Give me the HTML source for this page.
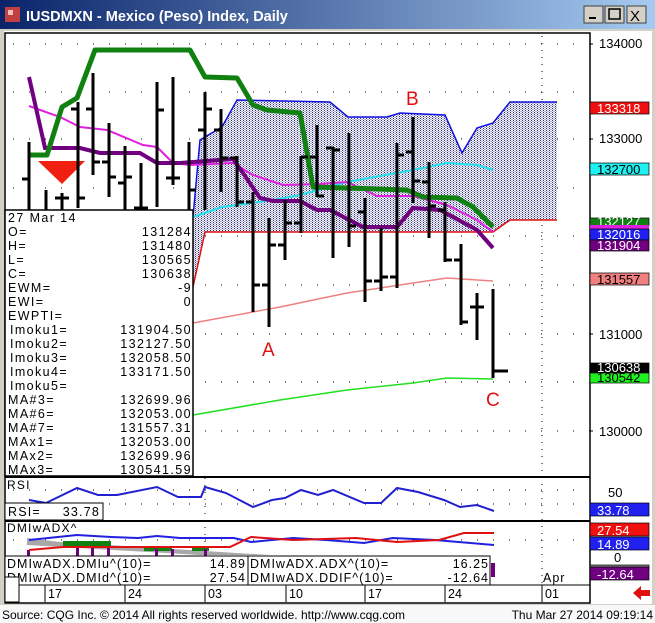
<!DOCTYPE html>
<html><head><meta charset="utf-8"><style>
body{margin:0;width:655px;height:623px;overflow:hidden;background:#D4D0C8}
svg{display:block}
text{font-family:"Liberation Sans",sans-serif}
</style></head><body>
<svg width="655" height="623" viewBox="0 0 655 623" xmlns="http://www.w3.org/2000/svg">
<defs>
<linearGradient id="tb" x1="0" x2="1"><stop offset="0" stop-color="#0A246A"/><stop offset="1" stop-color="#A6CAF0"/></linearGradient>
<pattern id="dots" width="3" height="2" patternUnits="userSpaceOnUse"><rect width="3" height="2" fill="#F4F4FA"/><rect width="1" height="1" fill="#303078"/><rect x="1.5" y="1" width="1" height="1" fill="#7070A8"/></pattern>
</defs>
<rect width="655" height="623" fill="#D4D0C8"/>
<rect x="0" y="605" width="655" height="18" fill="#F8F8F8"/>
<rect x="0" y="0" width="655" height="29" fill="url(#tb)"/>
<rect x="5" y="7" width="15" height="15" fill="#c04040"/><rect x="8" y="10" width="5" height="5" fill="#f0c0c0"/>
<text x="26" y="21" font-size="14.5" font-weight="bold" fill="#fff">IUSDMXN - Mexico (Peso) Index, Daily</text>
<g fill="#D4D0C8" stroke="#404040"><rect x="584" y="6" width="19" height="17"/><rect x="605" y="6" width="19" height="17"/><rect x="627" y="6" width="19" height="17"/></g>
<rect x="589" y="17" width="7" height="2" fill="#000"/>
<rect x="609" y="9" width="11" height="10" fill="none" stroke="#000" stroke-width="1.5"/>
<text x="630" y="21" font-size="15" fill="#000">X</text>
<rect x="4" y="31" width="648" height="573" fill="#fff"/>
<rect x="5" y="33" width="585" height="570" fill="#fff" stroke="#000" stroke-width="1.5"/>
<g stroke="#000" stroke-width="1" stroke-dasharray="1 15">
<line x1="13" y1="44" x2="585" y2="44"/><line x1="13" y1="92" x2="585" y2="92"/><line x1="13" y1="139" x2="585" y2="139"/><line x1="13" y1="188" x2="585" y2="188"/><line x1="13" y1="236" x2="585" y2="236"/><line x1="13" y1="285" x2="585" y2="285"/><line x1="13" y1="334" x2="585" y2="334"/><line x1="13" y1="382" x2="585" y2="382"/><line x1="13" y1="431" x2="585" y2="431"/>
</g>
<g stroke="#000" stroke-dasharray="1 6"><line x1="542" y1="36" x2="542" y2="600"/><line x1="205" y1="478" x2="205" y2="555"/></g>
<polygon fill="url(#dots)" points="193,217 200,140 222,127 237,100 330,102 348,117 387,117 400,113 445,115 462,153 477,128 493,123 510,102 557,102 557,220 510,220 493,232 205,232 193,287"/>
<polyline fill="none" stroke="#1010E0" stroke-width="1.5" points="193,217 200,140 222,127 237,100 330,102 348,117 387,117 400,113 445,115 462,153 477,128 493,123 510,102 557,102"/>
<polyline fill="none" stroke="#E01010" stroke-width="1.5" points="193,287 205,232 493,232 510,220 557,220"/>
<polyline fill="none" stroke="#F08080" stroke-width="1.5" points="193,323 280,307 347,293 413,283 447,278 493,281"/>
<polyline fill="none" stroke="#20E020" stroke-width="1.5" points="193,415 280,400 347,390 413,383 447,378 493,379"/>
<polyline fill="none" stroke="#20E0F0" stroke-width="2" points="193,217 222,207 273,200 300,195 347,182 413,170 447,163 477,165 493,170"/>
<polyline fill="none" stroke="#E020E0" stroke-width="2" points="29,106 60,117 80,127 107,130 143,145 157,147 173,163 190,165 233,163 253,175 283,185 320,184 347,182 377,196 413,196 447,205 477,220 493,232"/>
<polyline fill="none" stroke="#700080" stroke-width="4" points="29,77 45,148 80,148 100,153 140,153 157,163 180,163 233,159 243,173 260,198 273,201 300,201 317,210 330,210 363,227 397,227 413,208 440,210 477,230 493,248"/>
<polyline fill="none" stroke="#108010" stroke-width="5" stroke-linejoin="round" points="29,155 47,155 62,107 77,98 95,50 190,50 205,77 237,78 253,105 267,110 300,113 313,187 347,188 407,190 423,197 457,198 473,207 493,227"/>
<polygon points="38,161 85,161 62,184" fill="#F02010"/>
<g stroke="#000" stroke-width="3" fill="none">
<path d="M29 142V230M22 179h7M46 190V230M62 193V230M55 198h14M78 102V208M71 109h7M78 198h7M93 73V175M86 109h7M93 162h7M109 123V197M102 162h7M109 177h7M125 146V230M118 183h7M125 177h7M141 163V210M134 208h14M157 82V207M157 110h7M173 77V185M166 178h14M189 142V230M189 190h7M205 92V210M198 130h7M205 109h7M221 109V192M214 130h7M221 158h7M237 156V207M230 158h7M237 202h7M253 192V312M246 202h7M253 285h7M269 218V327M262 285h7M269 245h7M285 200V260M278 245h7M285 223h7M301 156V233M294 223h7M301 157h7M317 125V197M310 157h7M317 196h7M333 147V258M326 148h7M333 150h7M349 133V247M349 226h7M365 198V302M358 212h7M365 281h7M381 228V291M374 281h7M381 277h7M397 143V288M390 277h7M397 155h7M413 117V203M406 152h7M413 181h7M429 162V238M422 182h7M429 206h7M445 202V262M438 210h7M445 260h7M461 244V325M454 260h7M461 322h7M477 293V340M470 307h14M493 289V378M493 371h15"/>
</g>
<g fill="#E01010" font-size="19"><text x="262" y="356">A</text><text x="406" y="105">B</text><text x="486" y="406">C</text></g>
<rect x="5" y="210" width="188" height="266" fill="#fff" stroke="#000" stroke-width="1.5"/>
<g font-size="12.5" fill="#000" letter-spacing="1.4">
<text x="8" y="222">27 Mar 14</text>
<text x="8" y="236">O=</text><text x="8" y="250">H=</text><text x="8" y="264">L=</text><text x="8" y="278">C=</text><text x="8" y="292">EWM=</text><text x="8" y="306">EWI=</text><text x="8" y="320">EWPTI=</text>
<text x="10" y="334">Imoku1=</text><text x="10" y="348">Imoku2=</text><text x="10" y="362">Imoku3=</text><text x="10" y="376">Imoku4=</text><text x="10" y="390">Imoku5=</text>
<text x="8" y="404">MA#3=</text><text x="8" y="418">MA#6=</text><text x="8" y="432">MA#7=</text><text x="8" y="446">MAx1=</text><text x="8" y="460">MAx2=</text><text x="8" y="474">MAx3=</text>
<g text-anchor="end"><text x="192" y="236">131284</text><text x="192" y="250">131480</text><text x="192" y="264">130565</text><text x="192" y="278">130638</text><text x="192" y="292">-9</text><text x="192" y="306">0</text>
<text x="192" y="334">131904.50</text><text x="192" y="348">132127.50</text><text x="192" y="362">132058.50</text><text x="192" y="376">133171.50</text>
<text x="192" y="404">132699.96</text><text x="192" y="418">132053.00</text><text x="192" y="432">131557.31</text><text x="192" y="446">132053.00</text><text x="192" y="460">132699.96</text><text x="192" y="474">130541.59</text></g>
</g>
<line x1="5" y1="477" x2="590" y2="477" stroke="#000" stroke-width="2"/>
<line x1="5" y1="521" x2="590" y2="521" stroke="#000" stroke-width="2"/>
<g stroke="#000" stroke-dasharray="1 15"><line x1="13" y1="490" x2="585" y2="490"/><line x1="13" y1="504" x2="585" y2="504"/><line x1="13" y1="540" x2="585" y2="540"/></g>
<text x="7" y="489" font-size="12" letter-spacing="1.2">RSI</text>
<polyline fill="none" stroke="#2020D0" stroke-width="2" points="29,500 46,503 77,488 98,495 117,495 157,487 178,497 201,497 205,487 226,493 253,507 272,500 285,498 301,490 318,495 333,490 364,503 381,503 397,488 418,492 444,500 460,507 477,505 494,511"/>
<rect x="5" y="503" width="98" height="17" fill="#fff" stroke="#000"/>
<text x="8" y="516" font-size="12.5" letter-spacing="1.2">RSI=</text><text x="100" y="516" font-size="12.5" text-anchor="end" letter-spacing="1.2">33.78</text>
<text x="7" y="532" font-size="12" letter-spacing="1.2">DMIwADX^</text>
<polygon fill="#A8A8A8" points="27,538 60,542 270,555 200,555 27,545"/>
<g fill="#108010"><rect x="63" y="541" width="48" height="6"/><rect x="144" y="546" width="28" height="5"/><rect x="192" y="546" width="17" height="5"/></g>
<g fill="#700080"><rect x="27" y="550" width="3" height="6"/><rect x="76" y="547" width="3" height="9"/><rect x="91" y="547" width="3" height="9"/><rect x="107" y="547" width="3" height="9"/><rect x="155" y="549" width="3" height="7"/><rect x="171" y="549" width="3" height="7"/><rect x="204" y="549" width="3" height="7"/><rect x="491" y="563" width="4" height="14"/></g>
<polyline fill="none" stroke="#2020E0" stroke-width="2" points="29,540 77,535 111,537 138,538 157,536 180,538 234,538 251,542 293,538 326,540 364,543 393,538 435,540 494,545"/>
<polyline fill="none" stroke="#E01010" stroke-width="2" points="29,550 63,547 125,547 230,547 251,537 293,540 356,538 397,542 439,540 464,533 494,533"/>
<rect x="5" y="556" width="243" height="29" fill="#fff" stroke="#000"/>
<rect x="248" y="556" width="242" height="29" fill="#fff" stroke="#000"/>
<g font-size="12.5" letter-spacing="1">
<text x="7" y="568">DMIwADX.DMIu^(10)=</text><text x="246" y="568" text-anchor="end">14.89</text>
<text x="7" y="582">DMIwADX.DMId^(10)=</text><text x="246" y="582" text-anchor="end">27.54</text>
<text x="250" y="568">DMIwADX.ADX^(10)=</text><text x="489" y="568" text-anchor="end">16.25</text>
<text x="250" y="582">DMIwADX.DDIF^(10)=</text><text x="489" y="582" text-anchor="end">-12.64</text>
<text x="543" y="582">Apr</text>
</g>
<line x1="5" y1="585" x2="590" y2="585" stroke="#000"/>
<rect x="5" y="577" width="14" height="25" fill="#fff" stroke="#000"/>
<g stroke="#000"><line x1="45" y1="585" x2="45" y2="602"/><line x1="125" y1="585" x2="125" y2="602"/><line x1="205" y1="585" x2="205" y2="602"/><line x1="286" y1="585" x2="286" y2="602"/><line x1="365" y1="585" x2="365" y2="602"/><line x1="445" y1="585" x2="445" y2="602"/><line x1="542" y1="585" x2="542" y2="602"/></g>
<g font-size="12.5"><text x="48" y="598">17</text><text x="128" y="598">24</text><text x="208" y="598">03</text><text x="289" y="598">10</text><text x="368" y="598">17</text><text x="448" y="598">24</text><text x="545" y="598">01</text></g>
<g stroke="#000"><line x1="589" y1="44" x2="593" y2="44"/><line x1="589" y1="139" x2="593" y2="139"/><line x1="589" y1="236" x2="593" y2="236"/><line x1="589" y1="334" x2="593" y2="334"/><line x1="589" y1="431" x2="593" y2="431"/></g>
<g font-size="13" fill="#000"><text x="599" y="48">134000</text><text x="599" y="143">133000</text><text x="599" y="339">131000</text><text x="599" y="436">130000</text><text x="608" y="497">50</text><text x="614" y="562">0</text></g>
<g font-size="13" stroke="#000" stroke-width="0.7">
<rect x="590" y="102" width="59" height="12" fill="#F01010"/><text x="597" y="113" fill="#fff" stroke="none">133318</text>
<rect x="590" y="163" width="59" height="12" fill="#20F0F0"/><text x="597" y="174" fill="#000" stroke="none">132700</text>
<rect x="590" y="218" width="59" height="8" fill="#108010"/><text x="597" y="226" fill="#fff" stroke="none">132127</text>
<rect x="590" y="225" width="59" height="5" fill="#E020E0" stroke="none"/>
<rect x="590" y="229" width="59" height="11" fill="#2020F0"/><text x="597" y="239" fill="#fff" stroke="none">132016</text>
<rect x="590" y="240" width="59" height="11" fill="#700080"/><text x="597" y="250" fill="#fff" stroke="none">131904</text>
<rect x="590" y="273" width="59" height="12" fill="#F08080"/><text x="597" y="284" fill="#000" stroke="none">131557</text>
<rect x="590" y="363" width="59" height="10" fill="#000"/><text x="597" y="372" fill="#fff" stroke="none">130638</text>
<rect x="590" y="373" width="59" height="10" fill="#20F020"/><text x="597" y="382" fill="#000" stroke="none">130542</text>
<rect x="590" y="503" width="59" height="13" fill="#2020F0"/><text x="597" y="515" fill="#fff" stroke="none">33.78</text>
<rect x="590" y="523" width="59" height="13" fill="#F01010"/><text x="597" y="535" fill="#fff" stroke="none">27.54</text>
<rect x="590" y="537" width="59" height="13" fill="#2020F0"/><text x="597" y="549" fill="#fff" stroke="none">14.89</text>
<rect x="590" y="565" width="59" height="4" fill="#808080"/>
<rect x="590" y="567" width="59" height="13" fill="#700080"/><text x="597" y="579" fill="#fff" stroke="none">-12.64</text>
</g>
<polygon points="633,593 641,586 641,590 650,590 650,596 641,596 641,600" fill="#E01010"/>
<text x="2" y="619" font-size="12" fill="#000">Source: CQG Inc. © 2014 All rights reserved worldwide. http://www.cqg.com</text>
<text x="653" y="619" font-size="12" fill="#000" text-anchor="end">Thu Mar 27 2014 09:19:14</text>
</svg>
</body></html>
